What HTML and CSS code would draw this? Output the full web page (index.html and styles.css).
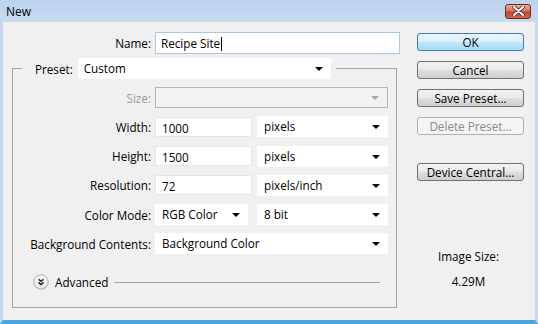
FILE: index.html
```html
<!DOCTYPE html>
<html lang="en">
<head>
    <meta charset="UTF-8">
    <title>New</title>
    <link rel="stylesheet" href="styles.css">
</head>
<body>
    <div class="window">
        <div class="titlebar">
            <span class="title">New</span>
            <button class="close-btn">
                <svg width="13" height="10" viewBox="0 0 13 10">
                    <path d="M2 1 L11 9 M11 1 L2 9" stroke="#5a1e1a" stroke-width="3.6" stroke-linecap="round"/>
                    <path d="M2 1 L11 9 M11 1 L2 9" stroke="#fff" stroke-width="2.2" stroke-linecap="round"/>
                </svg>
            </button>
        </div>

        <div class="dialog">
            <div class="main">
                <div class="name-row">
                    <label>Name:</label>
                    <div class="textbox focused">Recipe Site<span class="caret"></span></div>
                </div>

                <fieldset class="group">
                    <legend>
                        <div class="legend-inner">
                            <label>Preset:</label>
                            <div class="select preset">Custom<span class="arrow"></span></div>
                        </div>
                    </legend>

                    <div class="rows">
                        <label class="disabled">Size:</label>
                        <div class="select disabled wide"><span class="arrow"></span></div>

                        <label>Width:</label>
                        <div class="textbox">1000</div>
                        <div class="select">pixels<span class="arrow"></span></div>

                        <label>Height:</label>
                        <div class="textbox">1500</div>
                        <div class="select">pixels<span class="arrow"></span></div>

                        <label>Resolution:</label>
                        <div class="textbox">72</div>
                        <div class="select">pixels/inch<span class="arrow"></span></div>

                        <label>Color Mode:</label>
                        <div class="select mode">RGB Color<span class="arrow"></span></div>
                        <div class="select">8 bit<span class="arrow"></span></div>

                        <label>Background Contents:</label>
                        <div class="select wide">Background Color<span class="arrow"></span></div>
                    </div>

                    <div class="advanced">
                        <svg class="expander" width="16" height="16" viewBox="0 0 16 16">
                            <defs>
                                <linearGradient id="exp" x1="0" y1="0" x2="0" y2="1">
                                    <stop offset="0" stop-color="#ffffff"/>
                                    <stop offset="1" stop-color="#e2e2e2"/>
                                </linearGradient>
                            </defs>
                            <circle cx="8" cy="8" r="7.2" fill="url(#exp)" stroke="#a8a8a8"/>
                            <path d="M5.5 5.2 L8 7.4 L10.5 5.2 M5.5 8.4 L8 10.6 L10.5 8.4" fill="none" stroke="#222" stroke-width="1.4"/>
                        </svg>
                        <span>Advanced</span>
                        <div class="rule"></div>
                    </div>
                </fieldset>
            </div>

            <div class="side">
                <button class="btn default">OK</button>
                <button class="btn">Cancel</button>
                <button class="btn">Save Preset...</button>
                <button class="btn" disabled>Delete Preset...</button>
                <button class="btn device">Device Central...</button>

                <div class="image-size">
                    <p>Image Size:</p>
                    <p>4.29M</p>
                </div>
            </div>
        </div>
    </div>
</body>
</html>
```

FILE: styles.css
```css
body {
    margin: 0;
    padding: 0;
    font-family: 'Open Sans', 'Noto Sans', sans-serif;
    font-size: 11.7px;
    color: #000;
    background: #f0f0f0;
}
.window {
    width: 538px;
    height: 324px;
    display: flex;
    flex-direction: column;
    background: #f0f0f0;
}
.titlebar {
    height: 22px;
    flex-shrink: 0;
    display: flex;
    align-items: center;
    justify-content: space-between;
    padding: 0 7px 0 6px;
    background: linear-gradient(#bcd2ec, #c8dbf1);
}
.title {
    font-size: 12px;
    color: #000;
}
.close-btn {
    width: 26px;
    height: 15px;
    padding: 0;
    border: 1px solid #6d2a24;
    border-radius: 3px;
    background: linear-gradient(#e8ada2, #d4725f 45%, #c4452f 55%, #d06548);
    display: flex;
    align-items: center;
    justify-content: center;
}
.dialog {
    flex: 1;
    display: flex;
    border: 3px solid #c4d8ef;
    border-top: none;
    border-bottom: 4px solid #4aa4df;
}
.main {
    width: 388px;
    padding: 10px 0 0 9px;
}
.name-row {
    display: grid;
    grid-template-columns: 139px 245px;
    column-gap: 4px;
    align-items: center;
    height: 22px;
}
label {
    text-align: right;
    white-space: nowrap;
}
label.disabled {
    color: #9a9a9a;
}
.textbox {
    height: 20px;
    line-height: 20px;
    padding-left: 6px;
    background: #fff;
    border: 1px solid #e6e6e6;
    box-sizing: border-box;
    white-space: nowrap;
}
.textbox.focused {
    height: 22px;
    line-height: 20px;
    padding-left: 5px;
    border-color: #a9c7e6;
}
.caret {
    display: inline-block;
    width: 1px;
    height: 14px;
    margin-left: 1px;
    background: #000;
    vertical-align: -3px;
}
.select {
    position: relative;
    height: 21px;
    line-height: 21px;
    padding-left: 7px;
    background: #fff;
    box-sizing: border-box;
    white-space: nowrap;
}
.select .arrow {
    position: absolute;
    right: 8px;
    top: 9px;
    width: 0;
    height: 0;
    border-left: 4px solid transparent;
    border-right: 4px solid transparent;
    border-top: 4px solid #000;
}
.select.disabled {
    background: #f2f2f2;
    border: 1px solid #b5b5b5;
}
.select.disabled .arrow {
    top: 8px;
    border-top-color: #a8a8a8;
}
.select.wide {
    grid-column: 2 / 4;
}
.select.mode {
    width: 93px;
}
.group {
    width: 385px;
    margin: 4px 0 0;
    padding: 0 0 17px;
    border: 1px solid #a3a3a3;
    box-sizing: border-box;
    min-width: 0;
}
.group legend {
    margin-left: 9px;
    padding: 0 5px 0 13px;
}
.legend-inner {
    display: flex;
    align-items: center;
    gap: 5px;
}
.select.preset {
    width: 253px;
    padding-left: 6px;
}
.rows {
    display: grid;
    grid-template-columns: 138px 97px 132px;
    grid-auto-rows: 21px;
    column-gap: 4px;
    row-gap: 8.3px;
    align-items: center;
    margin-top: 8px;
}
.rows .textbox + .select,
.rows .mode + .select {
    margin-left: 1px;
}
.advanced {
    display: flex;
    align-items: center;
    margin: 20px 16px 0 20px;
    height: 16px;
}
.advanced span {
    margin-left: 6px;
}
.rule {
    flex: 1;
    height: 1px;
    margin-left: 6px;
    background: #a3a3a3;
}
.side {
    width: 107px;
    margin-left: 17px;
    padding-top: 11px;
    display: flex;
    flex-direction: column;
    gap: 10px;
}
.btn {
    height: 18px;
    padding: 0;
    font-family: inherit;
    font-size: 11.7px;
    color: #000;
    border: 1px solid #707070;
    border-radius: 3px;
    background: linear-gradient(#f2f2f2, #ebebeb 45%, #dddddd 55%, #cfcfcf);
}
.btn.default {
    border-color: #3c7fb1;
    background: linear-gradient(#eaf6fd, #d9f0fc 45%, #bee6fd 55%, #a7d9f5);
}
.btn:disabled {
    color: #8a8a8a;
    border-color: #b0b0b0;
    background: #f4f4f4;
}
.btn.device {
    margin-top: 18px;
}
.image-size {
    margin-top: 56px;
    padding-right: 4px;
    text-align: center;
}
.image-size p {
    margin: 0 0 7px;
    line-height: 18px;
}
```
